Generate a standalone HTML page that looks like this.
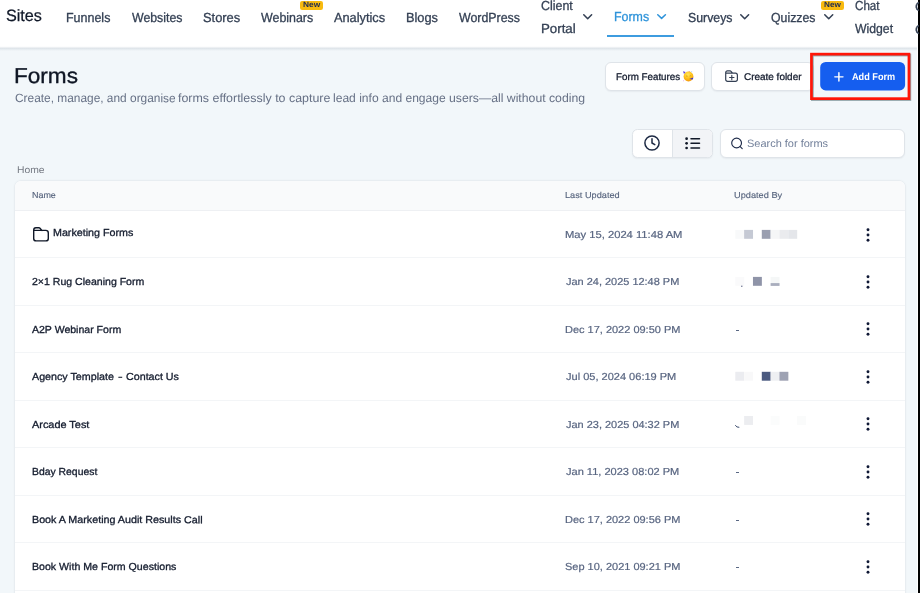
<!DOCTYPE html>
<html><head><meta charset="utf-8"><title>Forms</title>
<style>
html,body{margin:0;padding:0}
body{width:920px;height:593px;overflow:hidden;position:relative;background:#f2f7fa;font-family:"Liberation Sans", sans-serif;}
.a{position:absolute}
.t{position:absolute;white-space:pre;font-family:"Liberation Sans", sans-serif;transform-origin:0 0}
.tx{position:absolute;left:0;top:0;width:920px;height:593px;will-change:transform}
.hdr{left:0;top:0;width:920px;height:51px;background:linear-gradient(to bottom,#fff 0,#fff 46.3px,#dfe5ea 48.4px,#f2f7fa 51px)}
.btn{box-sizing:border-box;background:#fff;border:1px solid #dfe4e9;border-radius:6px;box-shadow:0 1px 1.5px rgba(16,24,40,.05)}
.card{left:14.9px;top:180.9px;width:890.4px;height:430px;background:#fff;border-radius:6px 6px 0 0;overflow:hidden;box-shadow:0 0 0 0.5px #e6ebf0, 0 0.5px 2.5px rgba(16,24,40,.10)}
.th{position:absolute;left:0;top:0;width:100%;height:28.9px;background:#f9fafb;border-bottom:1px solid #eef0f3}
.ln{position:absolute;left:0;width:100%;height:1px;background:#f3f5f7}
</style></head>
<body>
<div class="a hdr"></div>
<div class="a" style="left:607px;top:35px;width:67px;height:2px;background:#3d9cdf"></div>
<svg class="a" style="left:581.8px;top:13.0px" width="11.4" height="7.5" viewBox="-1 -1 11.4 7.5"><path d="M0.775 0.775 L4.70 4.72 L8.62 0.775" fill="none" stroke="#344054" stroke-width="1.55" stroke-linecap="round" stroke-linejoin="round"/></svg>
<svg class="a" style="left:656.1px;top:12.8px" width="11.2" height="7.1" viewBox="-1 -1 11.2 7.1"><path d="M0.775 0.775 L4.60 4.32 L8.42 0.775" fill="none" stroke="#2e93da" stroke-width="1.55" stroke-linecap="round" stroke-linejoin="round"/></svg>
<svg class="a" style="left:739.3px;top:13.0px" width="11.4" height="7.5" viewBox="-1 -1 11.4 7.5"><path d="M0.775 0.775 L4.70 4.72 L8.62 0.775" fill="none" stroke="#344054" stroke-width="1.55" stroke-linecap="round" stroke-linejoin="round"/></svg>
<svg class="a" style="left:822.5px;top:13.0px" width="11.5" height="7.5" viewBox="-1 -1 11.5 7.5"><path d="M0.775 0.775 L4.75 4.72 L8.72 0.775" fill="none" stroke="#344054" stroke-width="1.55" stroke-linecap="round" stroke-linejoin="round"/></svg>
<div class="a" style="left:300.1px;top:0.9px;width:23.10px;height:8.90px;background:#f8ba0f;border-radius:2.2px"></div>
<div class="a" style="left:821px;top:0.9px;width:23.10px;height:8.90px;background:#f8ba0f;border-radius:2.2px"></div>
<div class="a" style="left:914.9px;top:0;width:3.6px;height:47px;overflow:hidden;will-change:transform;z-index:5"><div class="t" style="left:0;top:-2.1px;font-size:13.5px;line-height:17.55px;color:#344054;-webkit-text-stroke:0.3px #344054">C</div><div class="t" style="left:0;top:20.9px;font-size:13.5px;line-height:17.55px;color:#344054;-webkit-text-stroke:0.3px #344054">C</div></div>
<div class="a btn" style="left:605px;top:62px;width:100px;height:29px"></div>
<div class="a btn" style="left:711px;top:62px;width:103px;height:29px"></div>
<svg class="a" style="left:818px;top:60px" width="90" height="33" viewBox="818 60 90 33"><rect x="820.2" y="62" width="84.9" height="28.4" rx="5.5" fill="#155eef"/></svg>
<svg class="a" style="left:682px;top:69.5px" width="13" height="13" viewBox="682 69.5 13 13"><defs><radialGradient id="eg" cx="0.45" cy="0.3" r="0.8"><stop offset="0" stop-color="#ffe65a"/><stop offset="0.55" stop-color="#fdbd17"/><stop offset="1" stop-color="#f08a0c"/></radialGradient></defs><circle cx="688.5" cy="76" r="4.9" fill="url(#eg)"/><path d="M683 70.8 L685.6 71.5 L684 73.6 Z" fill="#5a3fe0"/><path d="M689.2 78.4 L693.3 77.1 L692.8 79.1 Z" fill="#3a36cf"/><path d="M686 75.8 q0.8 -0.7 1.6 0 M689.6 75.6 q0.8 -0.7 1.6 0" stroke="#c07a10" stroke-width="0.6" fill="none"/><circle cx="691.7" cy="71.3" r="0.55" fill="#9fc4f5"/><circle cx="689.2" cy="71.1" r="0.5" fill="#f08a6a"/><circle cx="683.6" cy="80.3" r="0.5" fill="#e79ad8"/></svg>
<svg class="a" style="left:724px;top:69px" width="16" height="14" viewBox="724 69 16 14"><path d="M725.7 73.2 H735.6 a1.8 1.8 0 0 1 1.8 1.8 V79.5 a1.8 1.8 0 0 1 -1.8 1.8 H727.5 a1.8 1.8 0 0 1 -1.8 -1.8 V72.6 a1.7 1.7 0 0 1 1.7 -1.7 H730.1 a1.2 1.2 0 0 1 0.9 0.4 L732.6 73.2" fill="none" stroke="#344054" stroke-width="1.2" stroke-linecap="round" stroke-linejoin="round"/><path d="M729.6 77.5 H734 M731.8 75.3 V79.7" fill="none" stroke="#344054" stroke-width="1.1" stroke-linecap="round"/></svg>
<svg class="a" style="left:833px;top:70.5px" width="12" height="12" viewBox="833 70.5 12 12"><path d="M834.8 76.35 H843 M838.9 72.3 V80.4" stroke="#fff" stroke-width="1.45" stroke-linecap="round" fill="none"/></svg>
<svg class="a" style="left:805px;top:48px;overflow:visible" width="112" height="58" viewBox="805 48 112 58"><rect x="812.35" y="55.05" width="97.5" height="44.5" fill="none" stroke="rgba(70,100,105,.55)" stroke-width="2.7"/><rect x="811.45" y="54.15" width="97.5" height="44.5" fill="none" stroke="#ff1508" stroke-width="2.7"/></svg>
<div class="a" style="left:632px;top:129px;width:81px;height:29px;box-sizing:border-box;border:1px solid #dfe4e9;border-radius:5.5px;background:#fff;overflow:hidden;box-shadow:0 1px 1.5px rgba(16,24,40,.05)"><div style="position:absolute;left:39px;top:0;width:41px;height:28px;background:#f2f4f7;border-left:1px solid #dfe4e9"></div></div>
<svg class="a" style="left:643.3px;top:133.9px" width="18" height="18" viewBox="0 0 18 18"><circle cx="9" cy="9" r="7.1" fill="none" stroke="#1d2a44" stroke-width="1.5"/><path d="M9 4.8 V9 L11.8 10.6" fill="none" stroke="#1d2a44" stroke-width="1.5" stroke-linecap="round" stroke-linejoin="round"/></svg>
<svg class="a" style="left:684px;top:136px" width="18" height="15" viewBox="684 136 18 15"><circle cx="686.6" cy="138.7" r="1.35" fill="#101828"/><path d="M691 138.7 H699.5" stroke="#101828" stroke-width="1.5" stroke-linecap="round"/><circle cx="686.6" cy="143.35" r="1.35" fill="#101828"/><path d="M691 143.35 H699.5" stroke="#101828" stroke-width="1.5" stroke-linecap="round"/><circle cx="686.6" cy="148.0" r="1.35" fill="#101828"/><path d="M691 148.0 H699.5" stroke="#101828" stroke-width="1.5" stroke-linecap="round"/></svg>
<div class="a btn" style="left:720px;top:129px;width:185px;height:29px"></div>
<svg class="a" style="left:730px;top:136px" width="14" height="14" viewBox="730 136 14 14"><circle cx="736.6" cy="143" r="4.9" fill="none" stroke="#1f2c4a" stroke-width="1.15"/><path d="M740.2 146.7 L742.2 148.7" stroke="#1f2c4a" stroke-width="1.15" stroke-linecap="round"/></svg>
<div class="a card"><div class="th"></div><div class="ln" style="top:76.30px"></div><div class="ln" style="top:123.80px"></div><div class="ln" style="top:171.30px"></div><div class="ln" style="top:218.80px"></div><div class="ln" style="top:266.30px"></div><div class="ln" style="top:313.80px"></div><div class="ln" style="top:361.30px"></div><div class="ln" style="top:408.80px"></div></div>
<svg class="a" style="left:32px;top:226px" width="18" height="17" viewBox="32 226 18 17"><path d="M33.7 230.4 H45.8 a2.5 2.5 0 0 1 2.5 2.5 V238.4 a2.5 2.5 0 0 1 -2.5 2.5 H36.2 a2.5 2.5 0 0 1 -2.5 -2.5 V230 a2.2 2.2 0 0 1 2.2 -2.2 H38.9 a1.5 1.5 0 0 1 1.1 0.5 L41.9 230.4" fill="none" stroke="#101828" stroke-width="1.4" stroke-linecap="round" stroke-linejoin="round"/></svg>
<svg class="a" style="left:864.9px;top:225.60px" width="6" height="18" viewBox="0 0 6 18"><circle cx="3" cy="3.7" r="1.45" fill="#0f1835"/><circle cx="3" cy="9" r="1.45" fill="#0f1835"/><circle cx="3" cy="14.3" r="1.45" fill="#0f1835"/></svg>
<svg class="a" style="left:864.9px;top:273.03px" width="6" height="18" viewBox="0 0 6 18"><circle cx="3" cy="3.7" r="1.45" fill="#0f1835"/><circle cx="3" cy="9" r="1.45" fill="#0f1835"/><circle cx="3" cy="14.3" r="1.45" fill="#0f1835"/></svg>
<svg class="a" style="left:864.9px;top:320.46px" width="6" height="18" viewBox="0 0 6 18"><circle cx="3" cy="3.7" r="1.45" fill="#0f1835"/><circle cx="3" cy="9" r="1.45" fill="#0f1835"/><circle cx="3" cy="14.3" r="1.45" fill="#0f1835"/></svg>
<svg class="a" style="left:864.9px;top:367.89px" width="6" height="18" viewBox="0 0 6 18"><circle cx="3" cy="3.7" r="1.45" fill="#0f1835"/><circle cx="3" cy="9" r="1.45" fill="#0f1835"/><circle cx="3" cy="14.3" r="1.45" fill="#0f1835"/></svg>
<svg class="a" style="left:864.9px;top:415.32px" width="6" height="18" viewBox="0 0 6 18"><circle cx="3" cy="3.7" r="1.45" fill="#0f1835"/><circle cx="3" cy="9" r="1.45" fill="#0f1835"/><circle cx="3" cy="14.3" r="1.45" fill="#0f1835"/></svg>
<svg class="a" style="left:864.9px;top:462.75px" width="6" height="18" viewBox="0 0 6 18"><circle cx="3" cy="3.7" r="1.45" fill="#0f1835"/><circle cx="3" cy="9" r="1.45" fill="#0f1835"/><circle cx="3" cy="14.3" r="1.45" fill="#0f1835"/></svg>
<svg class="a" style="left:864.9px;top:510.18px" width="6" height="18" viewBox="0 0 6 18"><circle cx="3" cy="3.7" r="1.45" fill="#0f1835"/><circle cx="3" cy="9" r="1.45" fill="#0f1835"/><circle cx="3" cy="14.3" r="1.45" fill="#0f1835"/></svg>
<svg class="a" style="left:864.9px;top:557.61px" width="6" height="18" viewBox="0 0 6 18"><circle cx="3" cy="3.7" r="1.45" fill="#0f1835"/><circle cx="3" cy="9" r="1.45" fill="#0f1835"/><circle cx="3" cy="14.3" r="1.45" fill="#0f1835"/></svg>
<svg class="a" style="left:730px;top:220px" width="90" height="215" viewBox="730 220 90 215">
<rect x="735.30" y="229.90" width="8.9" height="8.9" fill="#f8f9fa"/>
<rect x="744.13" y="229.90" width="8.9" height="8.9" fill="#c5c9d4"/>
<rect x="761.79" y="229.90" width="8.9" height="8.9" fill="#9a9fb0"/>
<rect x="770.62" y="229.90" width="8.9" height="8.9" fill="#f5f6f7"/>
<rect x="779.45" y="229.90" width="8.9" height="8.9" fill="#eaebee"/>
<rect x="788.28" y="229.90" width="8.9" height="8.9" fill="#e4e6ea"/>
<rect x="735.30" y="276.90" width="8.9" height="8.9" fill="#fafafb"/>
<rect x="752.96" y="276.90" width="8.9" height="8.9" fill="#8f94a8"/>
<rect x="770.62" y="276.90" width="8.9" height="8.9" fill="#f5f7f7"/>
<rect x="770.62" y="283.10" width="8.9" height="2.8" fill="#a9adbd"/>
<rect x="741.20" y="285.60" width="1.2" height="1.4" fill="#6b7391"/>
<rect x="735.30" y="371.80" width="8.9" height="8.9" fill="#ebecf0"/>
<rect x="744.13" y="371.80" width="8.9" height="8.9" fill="#f8f8f9"/>
<rect x="761.79" y="371.80" width="8.9" height="8.9" fill="#4b5a80"/>
<rect x="770.62" y="371.80" width="8.9" height="8.9" fill="#eeeff2"/>
<rect x="779.45" y="371.80" width="8.9" height="8.9" fill="#9ea2b3"/>
<rect x="744.13" y="416.00" width="8.9" height="8.9" fill="#ecedf0"/>
<rect x="770.62" y="416.00" width="8.9" height="8.9" fill="#fbfcfc"/>
<rect x="797.11" y="416.00" width="8.9" height="8.9" fill="#fafbfb"/>
<path d="M735.3 425.2 Q736.4 427.6 739.3 427.3" fill="none" stroke="#3a4a6b" stroke-width="1"/></svg>
<div class="a" style="left:735.6px;top:329.85px;width:3.4px;height:1px;background:#5a6884"></div>
<div class="a" style="left:735.6px;top:472.35px;width:3.4px;height:1px;background:#5a6884"></div>
<div class="a" style="left:735.6px;top:519.85px;width:3.4px;height:1px;background:#5a6884"></div>
<div class="a" style="left:735.6px;top:567.35px;width:3.4px;height:1px;background:#5a6884"></div>
<div class="a" style="left:917px;top:0;width:1.4px;height:593px;background:#fff"></div>
<div class="a" style="left:918.4px;top:0;width:1.6px;height:593px;background:#000"></div>
<div class="tx">
<div class="t" style="left:6.02px;top:4.66px;font-size:16.4px;line-height:21.32px;font-weight:400;color:#101828;transform:scaleX(0.9868) rotate(0.05deg);-webkit-text-stroke:0.25px #101828;">Sites</div>
<div class="t" style="left:66.30px;top:8.95px;font-size:13.1px;line-height:17.03px;font-weight:400;color:#344054;transform:scaleX(0.9529) rotate(0.05deg);-webkit-text-stroke:0.3px #344054;">Funnels</div>
<div class="t" style="left:131.81px;top:8.95px;font-size:13.1px;line-height:17.03px;font-weight:400;color:#344054;transform:scaleX(0.9417) rotate(0.05deg);-webkit-text-stroke:0.3px #344054;">Websites</div>
<div class="t" style="left:203.21px;top:8.95px;font-size:13.1px;line-height:17.03px;font-weight:400;color:#344054;transform:scaleX(0.9823) rotate(0.05deg);-webkit-text-stroke:0.3px #344054;">Stores</div>
<div class="t" style="left:261.01px;top:8.95px;font-size:13.1px;line-height:17.03px;font-weight:400;color:#344054;transform:scaleX(0.9481) rotate(0.05deg);-webkit-text-stroke:0.3px #344054;">Webinars</div>
<div class="t" style="left:334.01px;top:8.95px;font-size:13.1px;line-height:17.03px;font-weight:400;color:#344054;transform:scaleX(0.9763) rotate(0.05deg);-webkit-text-stroke:0.3px #344054;">Analytics</div>
<div class="t" style="left:405.81px;top:8.95px;font-size:13.1px;line-height:17.03px;font-weight:400;color:#344054;transform:scaleX(0.9760) rotate(0.05deg);-webkit-text-stroke:0.3px #344054;">Blogs</div>
<div class="t" style="left:459.01px;top:8.95px;font-size:13.1px;line-height:17.03px;font-weight:400;color:#344054;transform:scaleX(0.9440) rotate(0.05deg);-webkit-text-stroke:0.3px #344054;">WordPress</div>
<div class="t" style="left:540.89px;top:-3.05px;font-size:13.1px;line-height:17.03px;font-weight:400;color:#344054;transform:scaleX(0.9488) rotate(0.05deg);-webkit-text-stroke:0.3px #344054;">Client</div>
<div class="t" style="left:540.71px;top:19.95px;font-size:13.1px;line-height:17.03px;font-weight:400;color:#344054;transform:scaleX(1.0149) rotate(0.05deg);-webkit-text-stroke:0.3px #344054;">Portal</div>
<div class="t" style="left:687.75px;top:8.95px;font-size:13.1px;line-height:17.03px;font-weight:400;color:#344054;transform:scaleX(0.9411) rotate(0.05deg);-webkit-text-stroke:0.3px #344054;">Surveys</div>
<div class="t" style="left:770.83px;top:8.95px;font-size:13.1px;line-height:17.03px;font-weight:400;color:#344054;transform:scaleX(0.9392) rotate(0.05deg);-webkit-text-stroke:0.3px #344054;">Quizzes</div>
<div class="t" style="left:855.01px;top:-3.05px;font-size:13.1px;line-height:17.03px;font-weight:400;color:#344054;transform:scaleX(0.8873) rotate(0.05deg);-webkit-text-stroke:0.3px #344054;">Chat</div>
<div class="t" style="left:855.05px;top:19.95px;font-size:13.1px;line-height:17.03px;font-weight:400;color:#344054;transform:scaleX(0.9347) rotate(0.05deg);-webkit-text-stroke:0.3px #344054;">Widget</div>
<div class="t" style="left:613.67px;top:7.95px;font-size:13.1px;line-height:17.03px;font-weight:400;color:#2e93da;transform:scaleX(0.9461) rotate(0.05deg);-webkit-text-stroke:0.3px #2e93da;">Forms</div>
<div class="t" style="left:303.33px;top:0.23px;font-size:7.8px;line-height:10.14px;font-weight:700;color:#1d2a52;transform:scaleX(1.0710) rotate(0.05deg);">New</div>
<div class="t" style="left:824.34px;top:0.23px;font-size:7.8px;line-height:10.14px;font-weight:700;color:#1d2a52;transform:scaleX(1.0492) rotate(0.05deg);">New</div>
<div class="t" style="left:14.09px;top:62.58px;font-size:21.5px;line-height:27.95px;font-weight:400;color:#0f1624;transform:scaleX(1.0498) rotate(0.05deg);-webkit-text-stroke:0.35px #0f1624;">Forms</div>
<div class="t" style="left:14.74px;top:91.04px;font-size:12px;line-height:15.6px;font-weight:400;color:#667085;transform:scaleX(0.9910) rotate(0.05deg);">Create, manage, and organise</div>
<div class="t" style="left:178.19px;top:91.04px;font-size:12px;line-height:15.6px;font-weight:400;color:#667085;transform:scaleX(1.0356) rotate(0.05deg);">forms effortlessly to capture</div>
<div class="t" style="left:333.22px;top:91.04px;font-size:12px;line-height:15.6px;font-weight:400;color:#667085;transform:scaleX(1.0056) rotate(0.05deg);">lead info and engage</div>
<div class="t" style="left:449.28px;top:91.04px;font-size:12px;line-height:15.6px;font-weight:400;color:#667085;transform:scaleX(1.0201) rotate(0.05deg);">users—all without coding</div>
<div class="t" style="left:615.98px;top:71.23px;font-size:9.8px;line-height:12.74px;font-weight:400;color:#141c2e;transform:scaleX(0.9984) rotate(0.05deg);-webkit-text-stroke:0.28px #141c2e;">Form Features</div>
<div class="t" style="left:744.39px;top:71.23px;font-size:9.8px;line-height:12.74px;font-weight:400;color:#141c2e;transform:scaleX(1.0155) rotate(0.05deg);-webkit-text-stroke:0.28px #141c2e;">Create folder</div>
<div class="t" style="left:851.63px;top:70.03px;font-size:10px;line-height:13.0px;font-weight:700;color:#ffffff;transform:scaleX(0.9165) rotate(0.05deg);">Add Form</div>
<div class="t" style="left:746.90px;top:137.34px;font-size:10.7px;line-height:13.91px;font-weight:400;color:#717f99;transform:scaleX(1.0262) rotate(0.05deg);">Search for forms</div>
<div class="t" style="left:16.65px;top:164.33px;font-size:9.7px;line-height:12.61px;font-weight:400;color:#757a83;transform:scaleX(1.0683) rotate(0.05deg);">Home</div>
<div class="t" style="left:31.97px;top:190.43px;font-size:8.6px;line-height:11.18px;font-weight:400;color:#55627c;transform:scaleX(1.0406) rotate(0.05deg);-webkit-text-stroke:0.12px #55627c;">Name</div>
<div class="t" style="left:565.48px;top:190.43px;font-size:8.6px;line-height:11.18px;font-weight:400;color:#55627c;transform:scaleX(1.0699) rotate(0.05deg);-webkit-text-stroke:0.12px #55627c;">Last Updated</div>
<div class="t" style="left:734.01px;top:190.43px;font-size:8.6px;line-height:11.18px;font-weight:400;color:#55627c;transform:scaleX(1.0726) rotate(0.05deg);-webkit-text-stroke:0.12px #55627c;">Updated By</div>
<div class="t" style="left:52.87px;top:225.84px;font-size:10.2px;line-height:13.26px;font-weight:400;color:#141c2e;transform:scaleX(1.0517) rotate(0.05deg);-webkit-text-stroke:0.3px #141c2e;">Marketing Forms</div>
<div class="t" style="left:565.39px;top:227.84px;font-size:10.2px;line-height:13.26px;font-weight:400;color:#586580;transform:scaleX(1.0992) rotate(0.05deg);-webkit-text-stroke:0.2px #586580;">May 15, 2024 11:48 AM</div>
<div class="t" style="left:32.09px;top:274.84px;font-size:10.2px;line-height:13.26px;font-weight:400;color:#141c2e;transform:scaleX(1.0356) rotate(0.05deg);-webkit-text-stroke:0.3px #141c2e;">2×1 Rug Cleaning Form</div>
<div class="t" style="left:565.52px;top:274.84px;font-size:10.2px;line-height:13.26px;font-weight:400;color:#586580;transform:scaleX(1.0753) rotate(0.05deg);-webkit-text-stroke:0.2px #586580;">Jan 24, 2025 12:48 PM</div>
<div class="t" style="left:32.19px;top:322.84px;font-size:10.2px;line-height:13.26px;font-weight:400;color:#141c2e;transform:scaleX(1.0339) rotate(0.05deg);-webkit-text-stroke:0.3px #141c2e;">A2P Webinar Form</div>
<div class="t" style="left:565.39px;top:322.84px;font-size:10.2px;line-height:13.26px;font-weight:400;color:#586580;transform:scaleX(1.0783) rotate(0.05deg);-webkit-text-stroke:0.2px #586580;">Dec 17, 2022 09:50 PM</div>
<div class="t" style="left:32.19px;top:369.84px;font-size:10.2px;line-height:13.26px;font-weight:400;color:#141c2e;transform:scaleX(1.0508) rotate(0.05deg);-webkit-text-stroke:0.3px #141c2e;">Agency Template</div>
<div class="t" style="left:117.51px;top:369.84px;font-size:10.2px;line-height:13.26px;font-weight:400;color:#141c2e;transform:scaleX(1.3653) rotate(0.05deg);-webkit-text-stroke:0.3px #141c2e;">-</div>
<div class="t" style="left:126.36px;top:369.84px;font-size:10.2px;line-height:13.26px;font-weight:400;color:#141c2e;transform:scaleX(1.0507) rotate(0.05deg);-webkit-text-stroke:0.3px #141c2e;">Contact Us</div>
<div class="t" style="left:565.65px;top:369.84px;font-size:10.2px;line-height:13.26px;font-weight:400;color:#586580;transform:scaleX(1.0821) rotate(0.05deg);-webkit-text-stroke:0.2px #586580;">Jul 05, 2024 06:19 PM</div>
<div class="t" style="left:32.19px;top:417.84px;font-size:10.2px;line-height:13.26px;font-weight:400;color:#141c2e;transform:scaleX(1.0704) rotate(0.05deg);-webkit-text-stroke:0.3px #141c2e;">Arcade Test</div>
<div class="t" style="left:565.52px;top:417.84px;font-size:10.2px;line-height:13.26px;font-weight:400;color:#586580;transform:scaleX(1.0753) rotate(0.05deg);-webkit-text-stroke:0.2px #586580;">Jan 23, 2025 04:32 PM</div>
<div class="t" style="left:31.94px;top:464.84px;font-size:10.2px;line-height:13.26px;font-weight:400;color:#141c2e;transform:scaleX(1.0200) rotate(0.05deg);-webkit-text-stroke:0.3px #141c2e;">Bday Request</div>
<div class="t" style="left:565.65px;top:464.84px;font-size:10.2px;line-height:13.26px;font-weight:400;color:#586580;transform:scaleX(1.0832) rotate(0.05deg);-webkit-text-stroke:0.2px #586580;">Jan 11, 2023 08:02 PM</div>
<div class="t" style="left:31.86px;top:512.84px;font-size:10.2px;line-height:13.26px;font-weight:400;color:#141c2e;transform:scaleX(1.0530) rotate(0.05deg);-webkit-text-stroke:0.3px #141c2e;">Book A Marketing Audit Results Call</div>
<div class="t" style="left:565.39px;top:512.84px;font-size:10.2px;line-height:13.26px;font-weight:400;color:#586580;transform:scaleX(1.0783) rotate(0.05deg);-webkit-text-stroke:0.2px #586580;">Dec 17, 2022 09:56 PM</div>
<div class="t" style="left:31.89px;top:559.84px;font-size:10.2px;line-height:13.26px;font-weight:400;color:#141c2e;transform:scaleX(1.0408) rotate(0.05deg);-webkit-text-stroke:0.3px #141c2e;">Book With Me Form Questions</div>
<div class="t" style="left:565.39px;top:559.84px;font-size:10.2px;line-height:13.26px;font-weight:400;color:#586580;transform:scaleX(1.0782) rotate(0.05deg);-webkit-text-stroke:0.2px #586580;">Sep 10, 2021 09:21 PM</div>
</div>
</body></html>
